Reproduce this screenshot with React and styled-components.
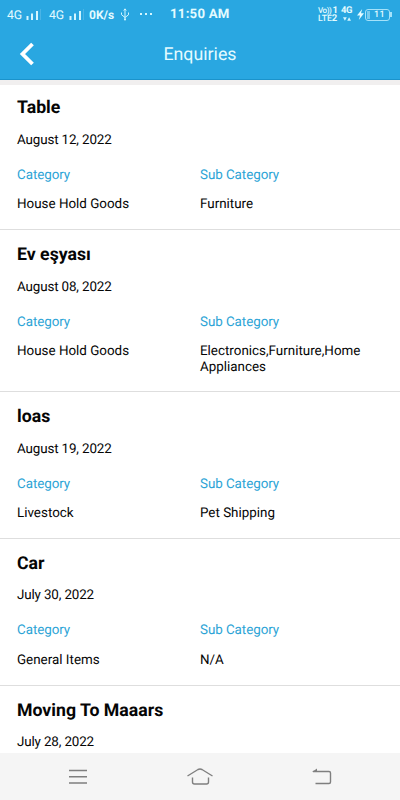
import React from "react";
import styled, { createGlobalStyle } from "styled-components";

const GlobalStyle = createGlobalStyle`
  * { box-sizing: border-box; }
  body { margin: 0; background: #fff; font-family: Roboto, "Noto Sans", sans-serif; color: #050505; text-rendering: geometricPrecision; }
`;

const Screen = styled.div`
  width: 400px;
  height: 800px;
  display: flex;
  flex-direction: column;
  overflow: hidden;
  background: #fff;
`;

const Top = styled.header`
  flex: none;
  height: 80px;
  background: #29a7e1;
  border-bottom: 1px solid #1b93cb;
  color: #e3fbff;
`;

const StatusBar = styled.div`
  height: 29px;
  display: flex;
  align-items: center;
  padding-left: 7px;
  white-space: nowrap;
`;

const StatusText = styled.span`
  flex: none;
  font-size: ${(p) => p.$size}px;
  font-weight: ${(p) => p.$weight};
  letter-spacing: ${(p) => p.$spacing || 0}px;
  width: ${(p) => p.$width}px;
  line-height: 28px;
  padding-top: 1px;
`;

const StatusIcon = styled.svg`
  flex: none;
  display: block;
  width: ${(p) => p.$w}px;
  height: 28px;
  margin-right: ${(p) => p.$gap || 0}px;
  fill: none;
  stroke: #d3f6ff;
`;

const NetworkStack = styled.div`
  flex: none;
  width: ${(p) => p.$width}px;
  display: flex;
  flex-direction: column;
  font-weight: 500;
  svg { display: block; margin-left: 2px; }
`;

const NetworkLine = styled.span`
  display: flex;
  align-items: center;
  gap: ${(p) => p.$gap || 0}px;
  height: 8px;
  font-size: ${(p) => p.$size}px;
  line-height: 8px;
  letter-spacing: ${(p) => p.$spacing || 0}px;
  b { font-weight: 700; font-size: 9.5px; }
`;

const Battery = styled.div`
  flex: none;
  width: 25px;
  height: 12px;
  border: 1px solid #a5e2fa;
  border-radius: 3px;
  display: flex;
  align-items: center;
  font-size: 9px;
  font-weight: 500;
  line-height: 10px;
  letter-spacing: 0.4px;
  padding: 1px;
  &::before { content: ""; width: 3px; height: 8px; margin-right: 4px; background: #79cbed; }
`;

const BatteryTip = styled.div`
  width: 2px;
  height: 5px;
  background: #a5e2fa;
`;

const TitleBar = styled.div`
  height: 50px;
  display: grid;
  grid-template-columns: 60px 1fr 60px;
  align-items: center;
`;

const BackButton = styled.button`
  border: 0;
  background: none;
  padding: 0 0 0 19px;
  height: 50px;
  svg { display: block; }
`;

const PageTitle = styled.h1`
  margin: 0;
  font-size: 17.8px;
  line-height: 24px;
  padding-top: 1px;
  font-weight: 400;
  text-align: center;
`;

const List = styled.main`
  flex: 1;
  min-height: 0;
  overflow: hidden;
  border-top: 5px solid #f1efef;
`;

const Item = styled.article`
  height: ${(p) => (p.$tall ? 162 : 146.8)}px;
  padding: 15.2px 17px 0;
  border-bottom: 1px solid #dedede;
  &:first-child { height: 145px; padding-top: 13.3px; }
  &:last-child { height: auto; border-bottom: 0; padding-top: 15px; }
`;

const ItemTitle = styled.h2`
  margin: 0 0 14.5px;
  font-size: 17.7px;
  line-height: 20px;
  font-weight: 700;
`;

const ItemDate = styled.time`
  display: block;
  font-size: 13.4px;
  line-height: 16px;
  letter-spacing: -0.14px;
`;

const Columns = styled.div`
  display: grid;
  grid-template-columns: 183px 183px;
  margin-top: 19px;
`;

const Label = styled.div`
  font-size: 13.4px;
  line-height: 16px;
  color: #2da4d6;
  letter-spacing: -0.06px;
  margin-bottom: 13.5px;
`;

const Value = styled.div`
  font-size: 13.4px;
  line-height: 15.4px;
`;

const NavBar = styled.nav`
  flex: none;
  height: 47px;
  background: #f5f5f5;
  display: flex;
  align-items: center;
  padding-left: 64px;
  gap: 94px;
  svg { width: 28px; height: 28px; fill: none; stroke: #7f7f7f; stroke-width: 1.4; }
`;

const enquiries = [
  { title: "Table", date: "August 12, 2022", category: "House Hold Goods", sub: "Furniture" },
  { title: "Ev eşyası", date: "August 08, 2022", category: "House Hold Goods", sub: "Electronics,Furniture,Home Appliances" },
  { title: "loas", date: "August 19, 2022", category: "Livestock", sub: "Pet Shipping" },
  { title: "Car", date: "July 30, 2022", category: "General Items", sub: "N/A" },
  { title: "Moving To Maaars", date: "July 28, 2022" },
];

const Signal = ({ gap }) => (
  <StatusIcon $w={18} $gap={gap} viewBox="0 0 18 28">
    <path d="M1.500 19v-4M6 19v-6.500M11 19v-9" strokeWidth="2" />
    <path d="M14.500 19V8" stroke="#4ab4e6" strokeWidth="1" />
  </StatusIcon>
);

export default function App() {
  return (
    <Screen>
      <GlobalStyle />
      <Top>
        <StatusBar>
          <StatusText $size={12.2} $weight={400} $width={19}>4G</StatusText>
          <Signal gap={5} />
          <StatusText $size={12.2} $weight={400} $width={20}>4G</StatusText>
          <Signal gap={2} />
          <StatusText $size={12} $weight={700} $width={31}>0K/s</StatusText>
          <StatusIcon $w={10} $gap={9} viewBox="0 0 10 28">
            <path d="M5 8v11M1.500 11.500v2.200L5 16.500l3.500-2.700v-2.300M3.700 9.500 5 7.800l1.300 1.700" />
            <circle cx="5" cy="18.500" r="1" fill="#d3f6ff" stroke="none" />
          </StatusIcon>
          <StatusIcon $w={14} $gap={17} viewBox="0 0 14 28">
            <path d="M1 13h2M6 13h2M11 13h2" strokeWidth="2" />
          </StatusIcon>
          <StatusText $size={13.2} $weight={700} $spacing={0.25} $width={148}>11:50 AM</StatusText>
          <NetworkStack $width={23}>
            <NetworkLine $size={8} $spacing={-0.4} $gap={1}>Vo))<b>1</b></NetworkLine>
            <NetworkLine $size={8.7}>LTE<b>2</b></NetworkLine>
          </NetworkStack>
          <NetworkStack $width={16}>
            <NetworkLine $spacing={-0.5}><b>4G</b></NetworkLine>
            <svg width="8" height="8" viewBox="0 0 8 8" fill="#d3f6ff">
              <path d="M0 2.200h3.800L1.900 5.800zM4.200 5.800H8L6.100 2.200z" />
            </svg>
          </NetworkStack>
          <StatusIcon $w={8} viewBox="0 0 8 28">
            <path d="M5.200 8 0 14.500h3L1.800 19 7 12.300H4z" fill="#e3fbff" stroke="none" />
          </StatusIcon>
          <Battery>11</Battery>
          <BatteryTip />
        </StatusBar>
        <TitleBar>
          <BackButton aria-label="Back">
            <svg width="16" height="24" viewBox="0 0 16 24" fill="none" stroke="#fff" strokeWidth="3.800">
              <path d="M13.500 2 3.500 12l10 10" />
            </svg>
          </BackButton>
          <PageTitle>Enquiries</PageTitle>
        </TitleBar>
      </Top>
      <List>
        {enquiries.map(({ title, date, category, sub }) => (
          <Item key={title} $tall={sub?.length > 30}>
            <ItemTitle>{title}</ItemTitle>
            <ItemDate>{date}</ItemDate>
            {category && (
              <Columns>
                <div><Label>Category</Label><Value>{category}</Value></div>
                <div><Label>Sub Category</Label><Value>{sub}</Value></div>
              </Columns>
            )}
          </Item>
        ))}
      </List>
      <NavBar>
        <svg viewBox="0 0 28 28"><path d="M5 7.500h18M5 13.800h18M5 20h18" /></svg>
        <svg viewBox="0 0 28 28"><path d="M1.500 13 12 6.500q2-1 4 0L26.500 13M6.500 14.500V19q0 2 2 2h12q2 0 2-2v-4.500" /></svg>
        <svg viewBox="0 0 28 28"><path d="M5 8.500H21q1.500 0 1.500 1.500v9q0 1.500-1.500 1.500H7.500" /><path d="M4 9l5-3.500V9z" fill="#7f7f7f" stroke="none" /></svg>
      </NavBar>
    </Screen>
  );
}
